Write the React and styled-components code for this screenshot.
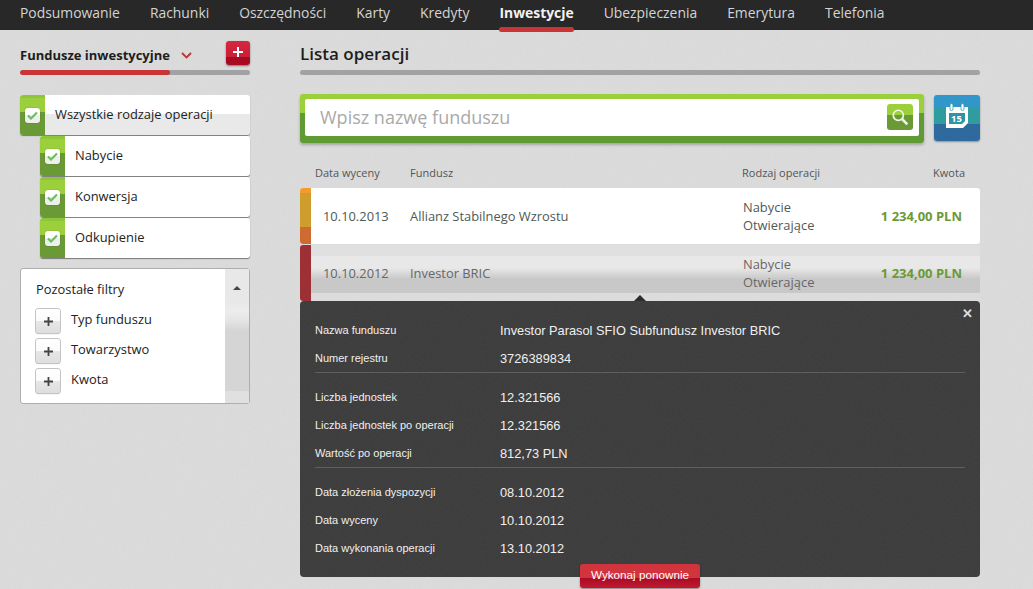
import React from 'react';
import styled, { createGlobalStyle } from 'styled-components';

const noise = (base, opacity) =>
  `url("data:image/svg+xml,%3Csvg xmlns='http://www.w3.org/2000/svg' width='200' height='200'%3E%3Cfilter id='n'%3E%3CfeTurbulence type='fractalNoise' baseFrequency='0.9' numOctaves='2'/%3E%3CfeColorMatrix values='0 0 0 0 ${base} 0 0 0 0 ${base} 0 0 0 0 ${base} 0 0 0 ${opacity} 0'/%3E%3C/filter%3E%3Crect width='200' height='200' filter='url(%23n)'/%3E%3C/svg%3E")`;

const GlobalStyle = createGlobalStyle`
  html, body {
    margin: 0;
    height: 589px;
    overflow: hidden;
    background: #dedede ${noise(0.5, 0.22)};
    font-family: "Open Sans", "Liberation Sans", sans-serif;
    color: #333;
  }
  * { box-sizing: border-box; }
`;

const TopNav = styled.nav`
  display: flex;
  gap: 30px;
  height: 30px;
  padding-left: 20px;
  background: #282828;
`;

const NavItem = styled.a`
  position: relative;
  font-size: 13.9px;
  line-height: 25px;
  font-weight: ${p => (p.$active ? 700 : 400)};
  color: ${p => (p.$active ? '#f2f2f2' : '#d4d4d4')};

  ${p =>
    p.$active &&
    `&::after {
      content: '';
      position: absolute;
      left: 0;
      right: 0;
      top: 27px;
      height: 5px;
      border-radius: 3px;
      background: #c93436;
    }`}
`;

const Page = styled.div`
  display: flex;
  gap: 50px;
  padding: 11px 0 0 20px;
`;

const Sidebar = styled.aside`
  width: 230px;
`;

const Main = styled.main`
  position: relative;
  width: 680px;
`;

const SideHeader = styled.div`
  display: flex;
  align-items: center;
  height: 29px;
`;

const SideTitle = styled.h2`
  margin: 0 11px 0 0;
  font-size: 13px;
  line-height: 29px;
  font-weight: 700;
  color: #1d1d1d;
`;

const AddButton = styled.button`
  align-self: flex-start;
  margin-left: auto;
  width: 24px;
  height: 24px;
  padding: 0 0 2px;
  border: 0;
  border-radius: 3px;
  display: flex;
  align-items: center;
  justify-content: center;
  background: linear-gradient(#d5283f 0, #c91f37 66%, #a80a22 66%, #a80a22 100%);
  box-shadow: 0 1px 2px rgba(0, 0, 0, 0.45);
`;

const Bar = styled.div`
  height: 5px;
  border-radius: 3px;
  background: #a2a2a5;
  overflow: hidden;
`;

const BarFill = styled.div`
  height: 100%;
  border-radius: 3px;
  background: #c93436;
`;

const FilterList = styled.div`
  display: flex;
  flex-direction: column;
  gap: 1px;
  margin-top: 20px;
`;

const FilterItem = styled.label`
  display: flex;
  align-items: center;
  height: 40px;
  padding-bottom: 2px;
  margin-left: ${p => (p.$nested ? '20px' : 0)};
  border-radius: 3px;
  overflow: hidden;
  font-size: 12.9px;
  color: #222;
  background: ${p => (p.$nested ? '#fff' : 'linear-gradient(#fff 0, #fff 47%, #e9e9e9 47%, #e9e9e9 100%)')};
  box-shadow: 0 1px 1px rgba(0, 0, 0, 0.45);
`;

const CheckCell = styled.span`
  flex: none;
  width: 25px;
  height: 40px;
  margin: 2px 10px 0 0;
  display: flex;
  align-items: center;
  justify-content: center;
  background: linear-gradient(#8dc63a 0, #8dc63a 7%, #9ccf3c 7%, #9ccf3c 42%, #6a9a36 42%, #6a9a36 100%);
`;

const CheckBox = styled.span`
  width: 15px;
  height: 15px;
  border-radius: 3px;
  display: flex;
  align-items: center;
  justify-content: center;
  background: linear-gradient(#fff 0, #fff 50%, #eee 50%);
  box-shadow: 0 0 1px rgba(0, 0, 0, 0.5);
`;

const OtherFilters = styled.section`
  position: relative;
  margin-top: 10px;
  height: 136px;
  padding: 11px 15px;
  border: 1px solid #aeaeae;
  border-radius: 3px;
  background: #fff;
`;

const Strip = styled.div`
  position: absolute;
  top: 0;
  right: 0;
  bottom: 0;
  width: 24px;
  padding-top: 17px;
  display: flex;
  justify-content: center;
  background: linear-gradient(
    #e8e8e8 0,
    #e8e8e8 32px,
    #ededed 42px,
    #e4e4e4 52px,
    #d5d5d5 62px,
    #d5d5d5 122px,
    #e0e0e0 122px
  );
`;

const Caret = styled.span`
  width: 0;
  height: 0;
  border-left: 4px solid transparent;
  border-right: 4px solid transparent;
  border-bottom: 4px solid #444;
`;

const OtherTitle = styled.div`
  font-size: 12.9px;
  line-height: 18px;
  color: #222;
`;

const OtherRows = styled.div`
  display: flex;
  flex-direction: column;
  gap: 6px;
  margin-top: 11px;
`;

const OtherRow = styled.div`
  display: flex;
  gap: 11px;
  font-size: 12.9px;
  line-height: 20px;
  color: #222;
`;

const PlusButton = styled.span`
  flex: none;
  width: 24px;
  height: 24px;
  display: flex;
  align-items: center;
  justify-content: center;
  border-radius: 3px;
  background: linear-gradient(#fff 0, #fbfbfb 50%, #e7e7e7 50%, #dedede 100%);
  box-shadow: 0 0 0 1px #c4c4c4, 0 1px 1px rgba(0, 0, 0, 0.4);
`;

const MainTitle = styled.h1`
  margin: 0;
  font-size: 17px;
  line-height: 25px;
  height: 29px;
  font-weight: 600;
  color: #1d1d1d;
`;

const SearchRow = styled.div`
  display: flex;
  gap: 10px;
  margin-top: 19px;
`;

const SearchBox = styled.div`
  width: 624px;
  height: 49px;
  padding: 5px 5px 7px;
  border-radius: 3px;
  background: linear-gradient(#9ccf3c 0, #9ccf3c 38%, #5f9a33 38%, #5f9a33 100%);
  box-shadow: 0 2px 3px rgba(0, 0, 0, 0.25);
`;

const SearchField = styled.div`
  display: flex;
  align-items: center;
  justify-content: space-between;
  height: 37px;
  padding: 0 6px 1px 15px;
  border-radius: 2px;
  background: #fff;
  font-size: 18px;
  color: #a9a9a9;
`;

const SearchButton = styled.span`
  width: 26px;
  height: 26px;
  display: flex;
  align-items: center;
  justify-content: center;
  border-radius: 3px;
  background: linear-gradient(#9ccf3c 0, #9ccf3c 42%, #6a9a36 42%, #6a9a36 100%);
`;

const CalendarButton = styled.span`
  width: 46px;
  height: 46px;
  margin-top: 1px;
  padding-bottom: 4px;
  display: flex;
  align-items: center;
  justify-content: center;
  border-radius: 3px;
  background: linear-gradient(#3196c9 0, #3196c9 26%, #2f9c9f 26%, #2f9c9f 63%, #2f6a9f 63%, #2f6a9f 100%);
  box-shadow: 0 1px 2px rgba(0, 0, 0, 0.35);
`;

const TableHead = styled.div`
  display: grid;
  grid-template-columns: 95px 332px 118px 1fr;
  height: 45px;
  padding: 22px 15px 0;
  font-size: 11px;
  line-height: 16px;
  color: #555;
`;

const HeadCell = styled.span`
  text-align: ${p => (p.$right ? 'right' : 'left')};
`;

const Row = styled.div`
  display: grid;
  grid-template-columns: 87px 333px 118px 1fr;
  align-items: center;
  height: 56px;
  margin-bottom: 1px;
  padding: 0 18px 0 23px;
  position: relative;
  border-radius: 3px;
  overflow: hidden;
  font-size: 12.9px;
  color: ${p => (p.$open ? '#666' : '#4f5a55')};
  background: ${p =>
    p.$open
      ? 'linear-gradient(#e0e0e0 0, #e0e0e0 11px, #e8e8e8 11px, #e8e8e8 23px, #c8c8c8 34px, #c8c8c8 48px, #dcdcdc 48px)'
      : '#fff'};

  &::before {
    content: '';
    position: absolute;
    left: 0;
    top: 0;
    bottom: 0;
    width: 11px;
    background: ${p =>
      p.$open
        ? '#9c3035'
        : 'linear-gradient(#f59a2c 0, #f59a2c 5px, #cf9d2e 5px, #cf9d2e 39px, #cf6b30 39px)'};
  }
`;

const TypeCell = styled.span`
  line-height: 18px;
`;

const Amount = styled.span`
  font-size: 13px;
  font-weight: 700;
  text-align: right;
  color: #6a9a36;
`;

const Details = styled.section`
  position: relative;
  height: 276px;
  margin-top: -1px;
  padding: 15px 15px 0;
  border-radius: 4px;
  background: #393939 ${noise(0.1, 0.35)};
  font-family: "Liberation Sans", Arial, sans-serif;
  color: #f0f0f0;

  &::before {
    content: '';
    position: absolute;
    top: -6px;
    left: 334px;
    border-left: 6px solid transparent;
    border-right: 6px solid transparent;
    border-bottom: 6px solid #2c2c2c;
  }
`;

const CloseMark = styled.span`
  position: absolute;
  top: 6px;
  right: 7px;
  font-size: 13px;
  line-height: 13px;
  font-weight: 700;
  color: #ddd;
`;

const DetailGroup = styled.div`
  & + & {
    padding-top: 10px;
    border-top: 1px solid #5f5f5f;
  }
`;

const DetailRow = styled.div`
  display: flex;
  align-items: center;
  height: 28px;
`;

const DetailLabel = styled.span`
  width: 185px;
  font-size: 11px;
`;

const DetailValue = styled.span`
  font-size: 12.8px;
`;

const RepeatButton = styled.button`
  position: absolute;
  left: 280px;
  top: 523px;
  width: 120px;
  height: 24px;
  padding: 0 0 3px;
  border: 0;
  border-radius: 3px;
  font-family: "Liberation Sans", Arial, sans-serif;
  font-size: 11.7px;
  color: #fff;
  background: linear-gradient(#d1343c 0, #d1343c 58%, #ab0a25 58%, #c01a30 100%);
  box-shadow: 0 1px 2px rgba(0, 0, 0, 0.4);
`;

const Check = () => (
  <svg width="11" height="9" viewBox="0 0 11 9">
    <path d="M1 4.5 4 7.5 10 1.5" fill="none" stroke="#6bbf5f" strokeWidth="2.2" />
  </svg>
);

const Plus = ({ color, size = 10, weight = 2 }) => (
  <svg width={size} height={size} viewBox="0 0 10 10">
    <path d="M5 0V10M0 5H10" stroke={color} strokeWidth={weight} />
  </svg>
);

const navItems = ['Podsumowanie', 'Rachunki', 'Oszczędności', 'Karty', 'Kredyty', 'Inwestycje', 'Ubezpieczenia', 'Emerytura', 'Telefonia'];

const detailGroups = [
  [
    ['Nazwa funduszu', 'Investor Parasol SFIO Subfundusz Investor BRIC'],
    ['Numer rejestru', '3726389834'],
  ],
  [
    ['Liczba jednostek', '12.321566'],
    ['Liczba jednostek po operacji', '12.321566'],
    ['Wartość po operacji', '812,73 PLN'],
  ],
  [
    ['Data złożenia dyspozycji', '08.10.2012'],
    ['Data wyceny', '10.10.2012'],
    ['Data wykonania operacji', '13.10.2012'],
  ],
];

const App = () => {
  return (
    <>
      <GlobalStyle />
      <TopNav>
        {navItems.map(item => (
          <NavItem key={item} $active={item === 'Inwestycje'}>
            {item}
          </NavItem>
        ))}
      </TopNav>
      <Page>
        <Sidebar>
          <SideHeader>
            <SideTitle>Fundusze inwestycyjne</SideTitle>
            <svg width="11" height="7" viewBox="0 0 11 7">
              <path d="M1 1 5.5 5.5 10 1" fill="none" stroke="#b8353a" strokeWidth="1.8" />
            </svg>
            <AddButton>
              <Plus color="#fff" />
            </AddButton>
          </SideHeader>
          <Bar>
            <BarFill style={{ width: '65%' }} />
          </Bar>
          <FilterList>
            <FilterItem>
              <CheckCell>
                <CheckBox>
                  <Check />
                </CheckBox>
              </CheckCell>
              Wszystkie rodzaje operacji
            </FilterItem>
            {['Nabycie', 'Konwersja', 'Odkupienie'].map(label => (
              <FilterItem key={label} $nested>
                <CheckCell>
                  <CheckBox>
                    <Check />
                  </CheckBox>
                </CheckCell>
                {label}
              </FilterItem>
            ))}
          </FilterList>
          <OtherFilters>
            <Strip>
              <Caret />
            </Strip>
            <OtherTitle>Pozostałe filtry</OtherTitle>
            <OtherRows>
              {['Typ funduszu', 'Towarzystwo', 'Kwota'].map(label => (
                <OtherRow key={label}>
                  <PlusButton>
                    <Plus color="#444" size={9} />
                  </PlusButton>
                  {label}
                </OtherRow>
              ))}
            </OtherRows>
          </OtherFilters>
        </Sidebar>
        <Main>
          <MainTitle>Lista operacji</MainTitle>
          <Bar />
          <SearchRow>
            <SearchBox>
              <SearchField>
                Wpisz nazwę funduszu
                <SearchButton>
                  <svg width="18" height="18" viewBox="0 0 16 16">
                    <circle cx="6.5" cy="6.5" r="4.5" fill="none" stroke="#f2f7e4" strokeWidth="1.5" />
                    <path d="M10 10 14.5 14.5" stroke="#f2f7e4" strokeWidth="2.2" />
                  </svg>
                </SearchButton>
              </SearchField>
            </SearchBox>
            <CalendarButton>
              <svg width="24" height="26" viewBox="0 0 24 26">
                <path d="M1 4H23V20L18 25H1Z" fill="#fff" />
                <rect x="5" y="0.5" width="3" height="7" rx="1.5" fill="#fff" stroke="#2f9c9f" strokeWidth="0.8" />
                <rect x="16" y="0.5" width="3" height="7" rx="1.5" fill="#fff" stroke="#2f9c9f" strokeWidth="0.8" />
                <path d="M4 10H20V18L17 21H4Z" fill="#2f93a5" />
                <text x="11.5" y="19" textAnchor="middle" fontSize="9.5" fontWeight="700" fill="#fff" fontFamily="Open Sans, sans-serif">
                  15
                </text>
              </svg>
            </CalendarButton>
          </SearchRow>
          <TableHead>
            <HeadCell>Data wyceny</HeadCell>
            <HeadCell>Fundusz</HeadCell>
            <HeadCell>Rodzaj operacji</HeadCell>
            <HeadCell $right>Kwota</HeadCell>
          </TableHead>
          <Row>
            <span>10.10.2013</span>
            <span>Allianz Stabilnego Wzrostu</span>
            <TypeCell>
              Nabycie
              <br />
              Otwierające
            </TypeCell>
            <Amount>1 234,00 PLN</Amount>
          </Row>
          <Row $open>
            <span>10.10.2012</span>
            <span>Investor BRIC</span>
            <TypeCell>
              Nabycie
              <br />
              Otwierające
            </TypeCell>
            <Amount>1 234,00 PLN</Amount>
          </Row>
          <Details>
            <CloseMark>✕</CloseMark>
            {detailGroups.map((group, i) => (
              <DetailGroup key={i}>
                {group.map(([label, value]) => (
                  <DetailRow key={label}>
                    <DetailLabel>{label}</DetailLabel>
                    <DetailValue>{value}</DetailValue>
                  </DetailRow>
                ))}
              </DetailGroup>
            ))}
          </Details>
          <RepeatButton>Wykonaj ponownie</RepeatButton>
        </Main>
      </Page>
    </>
  );
};

export default App;
